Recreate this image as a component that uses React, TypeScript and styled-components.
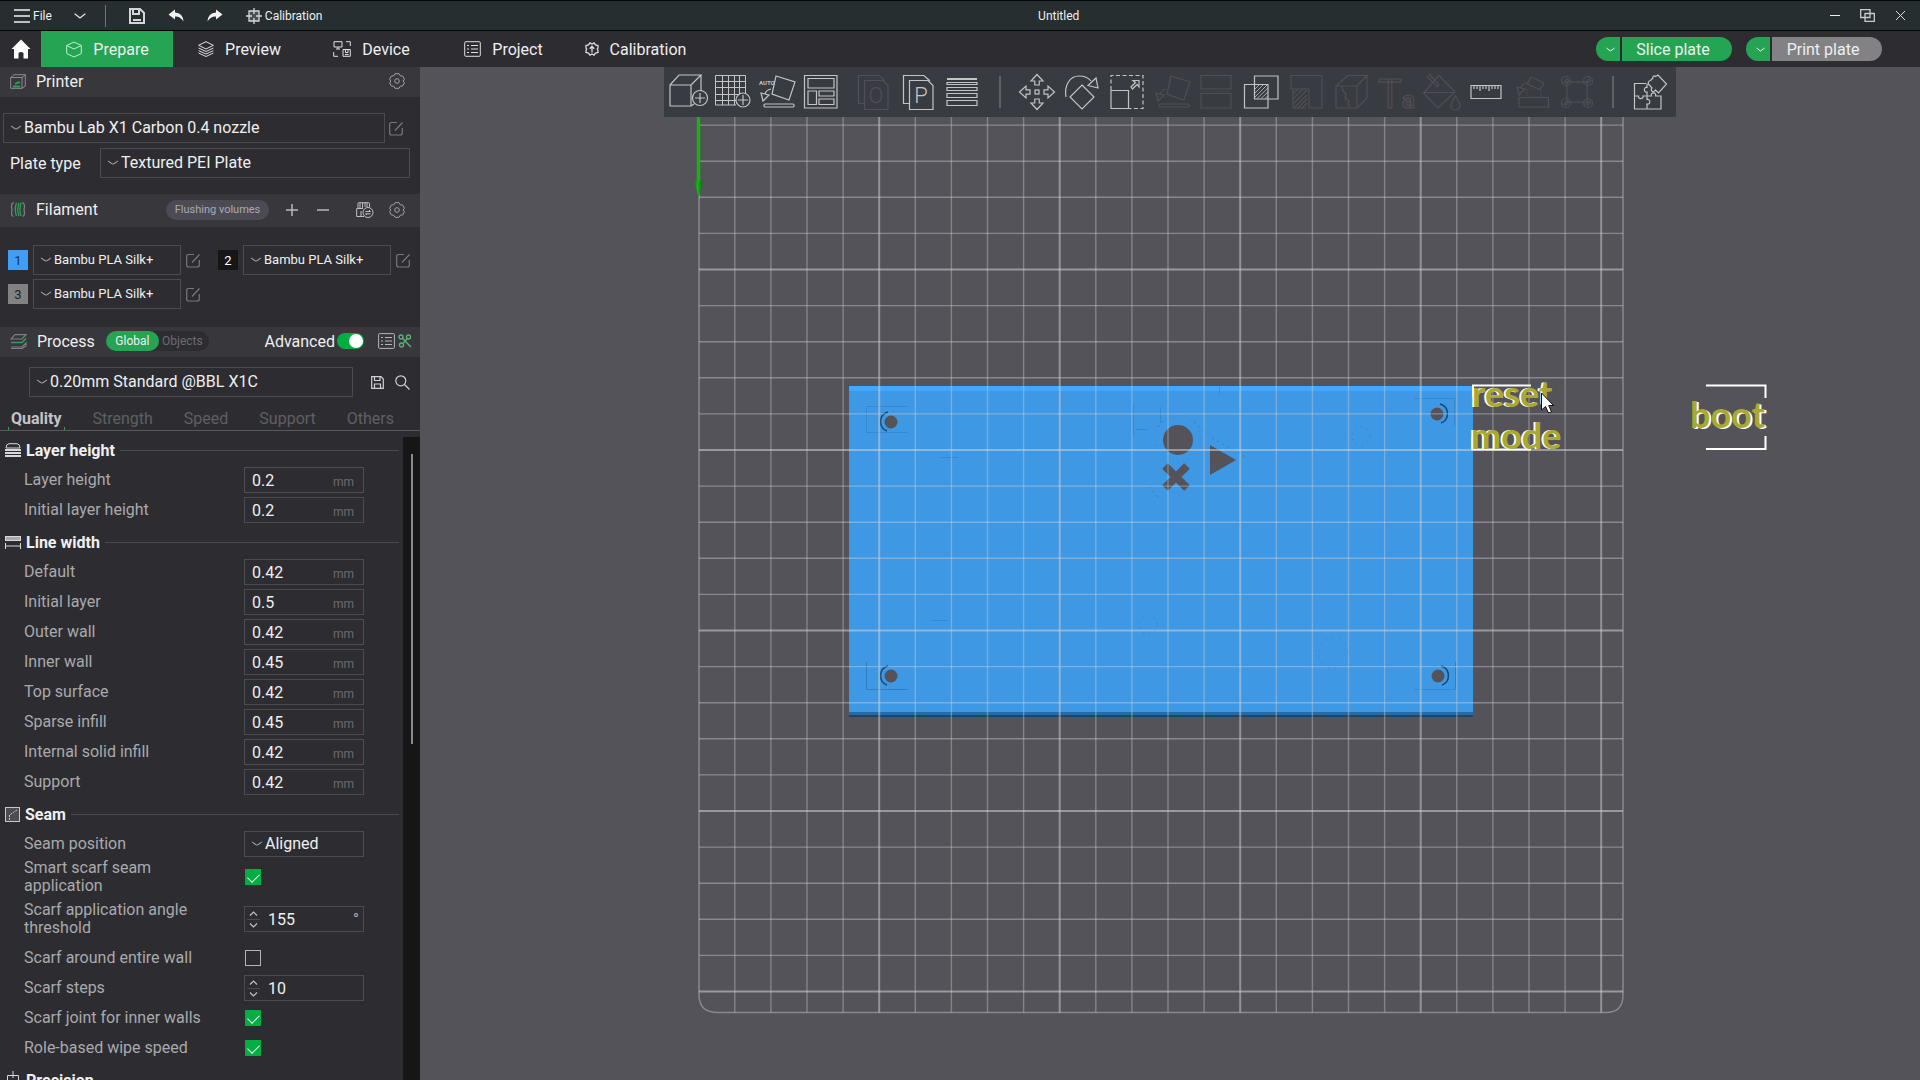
import React, { useId } from "react";
import styled, { createGlobalStyle, css } from "styled-components";

const c = {
  title: "#262e30",
  bar: "#2d2d31",
  head: "#37373c",
  line: "#4a4a51",
  green: "#25a453",
  bright: "#00ae42",
  text: "#efeff0",
  label: "#a9a9ad",
  dim: "#6b6b70",
  view: "#545359",
  tool: "#383b41",
};

const GlobalStyle = createGlobalStyle`
  * { box-sizing: border-box; }
  body { margin: 0; background: ${c.bar}; }
  body, button, input, select {
    font-family: Roboto, "Liberation Sans", sans-serif;
    font-size: 16px;
    color: ${c.text};
  }
  button { border: 0; padding: 0; background: none; }
  svg { display: block; flex: none; }
`;

const Shell = styled.div`
  display: flex;
  flex-direction: column;
  height: 100vh;
  overflow: hidden;
`;

/* ---------- title bar ---------- */
const TitleBar = styled.header`
  display: flex;
  align-items: center;
  height: 31px;
  flex: none;
  background: ${c.title};
  border-top: 1px solid #050606;
  border-bottom: 1px solid #050606;
  padding-right: 3px;
`;
const MenuGroup = styled.div`
  display: flex;
  align-items: center;
  padding-left: 14px;
  button {
    display: flex;
    align-items: center;
    gap: 3px;
    font-size: 12px;
  }
`;
const MenuCaret = styled.button`
  margin: 0 19px 0 22px;
`;
const MenuDivider = styled.div`
  width: 1px;
  height: 22px;
  background: #6f7475;
`;
const QuickActions = styled.div`
  display: flex;
  gap: 23px;
  margin-left: 23px;
`;
const DocTitle = styled.h1`
  flex: 1;
  margin: 0;
  text-align: center;
  font-size: 12px;
  font-weight: 400;
`;
const WindowControls = styled.div`
  display: flex;
  padding-left: 23px;
  button {
    width: 33px;
    height: 28px;
    display: flex;
    align-items: center;
    justify-content: center;
  }
`;

/* ---------- navigation ---------- */
const NavBar = styled.nav`
  display: flex;
  align-items: center;
  height: 36px;
  flex: none;
  background: ${c.bar};
  padding-right: 38px;
`;
const Home = styled.button`
  width: 41px;
  display: flex;
  justify-content: center;
`;
const NavTab = styled.button<{ $active?: boolean }>`
  width: 132px;
  height: 36px;
  display: flex;
  align-items: center;
  justify-content: center;
  gap: 11px;
  padding-left: 1px;
  background: ${(p) => (p.$active ? c.green : "transparent")};
`;
const NavSpace = styled.div`
  flex: 1;
`;
const SplitButton = styled.div`
  display: flex;
  gap: 2px;
  margin-left: 14px;
`;
const SplitCaret = styled.button`
  width: 24px;
  height: 24px;
  display: flex;
  align-items: center;
  justify-content: center;
  padding-left: 4px;
  border-radius: 12px 0 0 12px;
  background: ${c.green};
`;
const SplitMain = styled.button<{ $muted?: boolean }>`
  width: 110px;
  height: 24px;
  padding-right: 8px;
  border-radius: 0 12px 12px 0;
  background: ${(p) => (p.$muted ? "#828284" : c.green)};
`;

/* ---------- sidebar ---------- */
const Body = styled.div`
  display: flex;
  flex: 1;
  min-height: 0;
`;
const Sidebar = styled.aside`
  width: 420px;
  flex: none;
  display: flex;
  flex-direction: column;
  background: ${c.bar};
`;
const SectionHead = styled.div<{ $tall?: boolean; $wide?: boolean }>`
  display: flex;
  align-items: center;
  flex: none;
  height: ${(p) => (p.$tall ? 33 : 30)}px;
  padding: 0 ${(p) => (p.$wide ? 8 : 15)}px 2px 10px;
  background: ${c.head};
  h2 {
    margin: 0 0 0 10px;
    font-size: 16px;
    font-weight: 400;
  }
`;
const Push = styled.div`
  margin-left: auto;
  display: flex;
  align-items: center;
`;
const PrinterBody = styled.div`
  display: flex;
  flex-direction: column;
  gap: 5px;
  padding: 16px 10px 16px 3px;
`;
const Row = styled.div<{ $gap?: number }>`
  display: flex;
  align-items: center;
  gap: ${(p) => p.$gap ?? 4}px;
`;
const PlateLabel = styled.label`
  width: 90px;
  margin-left: 7px;
  margin-right: -4px;
`;
const SelectBox = styled.div<{ $w?: number; $h?: number; $small?: boolean }>`
  display: flex;
  align-items: center;
  height: ${(p) => p.$h ?? 30}px;
  ${(p) => (p.$w ? css`width: ${p.$w}px;` : css`flex: 1;`)}
  border: 1px solid ${c.line};
  padding: 0 0 1px 6px;
  select {
    flex: 1;
    min-width: 0;
    appearance: none;
    border: 0;
    padding: 0 0 0 2px;
    background: transparent;
    font-size: ${(p) => (p.$small ? 13 : 16)}px;
    outline: none;
  }
`;
const Pill = styled.button`
  width: 103px;
  height: 20px;
  border-radius: 10px;
  background: #4c4b54;
  color: #aaaab0;
  font-size: 11px;
`;
const HeadButtons = styled.div<{ $gap: number; $left: number }>`
  display: flex;
  align-items: center;
  gap: ${(p) => p.$gap}px;
  margin-left: ${(p) => p.$left}px;
  button { display: flex; }
`;
const FilamentGrid = styled.div`
  display: grid;
  grid-template-columns: 210px 1fr;
  row-gap: 4px;
  padding: 18px 8px;
`;
const Swatch = styled.button<{ $bg: string; $fg: string }>`
  width: 20px;
  height: 20px;
  background: ${(p) => p.$bg};
  color: ${(p) => p.$fg};
  font-size: 13px;
`;
const Segmented = styled.div`
  display: flex;
  width: 103px;
  height: 20px;
  margin-left: 11px;
  border-radius: 10px;
  background: ${c.bar};
`;
const Segment = styled.button<{ $on?: boolean }>`
  width: ${(p) => (p.$on ? 53 : 47)}px;
  border-radius: 10px;
  font-size: 12px;
  background: ${(p) => (p.$on ? c.green : "transparent")};
  color: ${(p) => (p.$on ? c.text : c.dim)};
`;
const Switch = styled.input`
  appearance: none;
  display: flex;
  align-items: center;
  justify-content: flex-end;
  width: 27px;
  height: 16px;
  margin: 0 14px 0 2px;
  padding: 0 1px;
  border-radius: 8px;
  background: ${c.bright};
  &::after {
    content: "";
    width: 14px;
    height: 14px;
    border-radius: 50%;
    background: #fff;
  }
`;
const ProcessRow = styled.div`
  display: flex;
  align-items: center;
  padding: 10px 10px 0 29px;
`;
const Tabs = styled.div`
  display: flex;
  flex: none;
  gap: 31px;
  height: 34px;
  padding: 0 8px;
  border-bottom: 1px solid #59595d;
`;
const Tab = styled.button<{ $on?: boolean }>`
  color: ${(p) => (p.$on ? "#c4c4c7" : "#5f5f64")};
  font-weight: ${(p) => (p.$on ? 700 : 400)};
  padding-top: 10px;
  ${(p) =>
    p.$on &&
    css`
      padding: 10px 3px 0;
      margin-right: -3px;
      background: linear-gradient(${c.green}, ${c.green}) 0 100% / 1px 3px no-repeat,
        linear-gradient(${c.green}, ${c.green}) 100% 100% / 1px 3px no-repeat;
    `}
`;
const Scroller = styled.div`
  display: flex;
  flex: 1;
  min-height: 0;
  overflow: hidden;
`;
const Settings = styled.div`
  flex: 1;
  padding: 4px 4px 0 5px;
`;
const Track = styled.div`
  width: 17px;
  margin-top: 6px;
  padding: 17px 7px 0 8px;
  background: #161616;
`;
const Thumb = styled.div`
  height: 290px;
  background: #8b8b8d;
`;
const Group = styled.fieldset`
  border: 0;
  margin: 0 0 2px;
  padding: 0;
`;
const GroupTitle = styled.div`
  display: flex;
  align-items: center;
  height: 30px;
  gap: 5px;
  font-weight: 700;
  &::after {
    content: "";
    flex: 1;
    height: 1px;
    background: ${c.line};
  }
`;
const Setting = styled.div<{ $h?: number }>`
  display: flex;
  align-items: center;
  height: ${(p) => p.$h ?? 30}px;
  padding-left: 19px;
`;
const SettingLabel = styled.label`
  width: 190px;
  margin-right: 30px;
  line-height: 18px;
  color: ${c.label};
`;
const FieldBox = styled.div`
  display: flex;
  align-items: center;
  width: 120px;
  height: 26px;
  border: 1px solid ${c.line};
  padding: 0 9px 0 7px;
  input {
    flex: 1;
    min-width: 0;
    border: 0;
    padding: 0;
    background: none;
    outline: none;
  }
  span {
    padding-top: 4px;
    font-size: 12px;
    color: ${c.dim};
  }
`;
const SpinBox = styled(FieldBox)`
  padding: 0 4px 0 2px;
  span { padding: 0; font-size: 16px; color: ${c.label}; }
`;
const Spin = styled.div`
  display: flex;
  flex-direction: column;
  margin-right: 8px;
  button {
    display: flex;
    align-items: center;
    justify-content: center;
    width: 13px;
    height: 12px;
  }
  button + button { border-top: 1px solid ${c.line}; }
`;
const Check = styled.input`
  appearance: none;
  display: flex;
  justify-content: center;
  width: 16px;
  height: 16px;
  margin: 0 0 0 1px;
  border: 1px solid #b4b4b6;
  &:checked {
    border-color: ${c.bright};
    background: ${c.bright};
  }
  &:checked::after {
    content: "";
    width: 10px;
    height: 6px;
    margin-top: 3px;
    border: solid #fff;
    border-width: 0 0 1px 1px;
    transform: rotate(-45deg);
  }
`;

/* ---------- viewport ---------- */
const Viewport = styled.main`
  position: relative;
  flex: 1;
  min-width: 0;
  display: flex;
  justify-content: center;
  align-items: flex-start;
  background: ${c.view};
`;
const Scene = styled.svg`
  position: absolute;
  inset: 0;
  width: 100%;
  height: 100%;
`;
const Toolbar = styled.div`
  position: relative;
  display: flex;
  align-items: center;
  height: 50px;
  padding-right: 4px;
  background: ${c.tool};
`;
const Tool = styled.button<{ $gap?: number }>`
  width: 45px;
  height: 50px;
  margin-left: ${(p) => p.$gap ?? 0}px;
  color: #c2c4c6;
  &:disabled { color: #504e56; }
`;
const ToolSep = styled.div`
  width: 2px;
  height: 32px;
  margin: 0 13px;
  background: #5e6065;
`;

/* ---------- icons ---------- */
type IcoProps = { w: number; h?: number; sw?: number; color?: string; children: React.ReactNode };
const Ico = ({ w, h = w, sw = 1, color = "#cfcfd1", children }: IcoProps) => (
  <svg width={w} height={h} viewBox={`0 0 ${w} ${h}`} fill="none" stroke={color} strokeWidth={sw} aria-hidden="true">
    {children}
  </svg>
);
const Chevron = ({ color = "#9d9da1" }: { color?: string }) => (
  <Ico w={12} h={6} color={color} sw={1.2}><path d="M1 1 C3 2 5 4 6 4 S9 2 11 1" /></Ico>
);
const Edit = () => (
  <Ico w={14} h={15} color="#77777c" sw={1.2}>
    <path d="M8 1.5H2.5Q.7 1.5 .7 3.5V12Q.7 14 2.5 14H11Q13.3 14 13.3 12V7M6 9.5L13.5 1.5" />
  </Ico>
);
const Gear = () => (
  <Ico w={16} color="#a2a2a6">
    <path d="M6 .7H10L11.3 2.8 13.6 3 15.4 6.2 14.2 8 15.4 9.8 13.6 13 11.3 13.2 10 15.3H6L4.7 13.2 2.4 13 .6 9.8 1.8 8 .6 6.2 2.4 3 4.7 2.8Z" />
    <circle cx="8" cy="8" r="2.3" />
  </Ico>
);

/* toolbar drawings, each on a 45 x 50 tile */
const dim = ["O", "lay", "cut", "support", "seam", "text", "paint", "assemble", "brim"];
const lay = (
  <>
    <path d="M22 9L41 15 35 33 18 27Z" />
    <path d="M7 26L15 28 9 34ZM11 27Q12 23 17 22" />
    <rect x="10" y="37" width="30" height="3" rx="1" />
  </>
);
const page = (letter: string) => (
  <>
    <path d="M13.500 13.500H32L37 18.500V42.500H13.500Z" />
    <path d="M13.500 36.500H7.500V8.500H28L34 14" />
    <text x="25" y="36" fontSize="22" fontWeight="300" textAnchor="middle" fill="currentColor" stroke="none">{letter}</text>
  </>
);
const tools: Record<string, React.ReactNode> = {
  add: (
    <>
      <path d="M6 18H27V39H6ZM6 18L15 8H37L27 18M37 8V24M27 39L30 37" />
      <circle cx="36" cy="31" r="7.5" /><path d="M36 26V36M31 31H41" />
    </>
  ),
  plate: (
    <>
      <path d="M27 38H6.500V8.500H36.500V26M13.500 8V38M19.500 8V38M25.500 8V38M30.500 8V27M6 14.500H36M6 20.500H36M6 27.500H30M6 33.500H27" strokeWidth="1" />
      <circle cx="34" cy="33" r="7" /><path d="M34 28V38M29 33H39" />
    </>
  ),
  auto: (
    <>
      <text x="5" y="18" fontSize="6" fontWeight="700" fill="currentColor" stroke="none">AUTO</text>
      {lay}
    </>
  ),
  arrange: <path d="M5.5 8.5H38V41H5.5ZM9 11.5H35V21H9ZM9 24H17.5V37.5H9ZM20 24H35V29H20ZM20 32H35V37.5H20Z" />,
  O: page("O"),
  P: page("P"),
  layers: <><path d="M6 12H36" strokeWidth="2" /><path d="M6 15.5H36V17.5H6ZM6 20.5H36V23.5H6ZM6 26.5H36V30.5H6ZM6 33.5H36V38.5H6Z" /></>,
  move: (
    <>
      <rect x="21" y="23" width="4" height="4" />
      {[0, 90, 180, 270].map((a) => (
        <path key={a} transform={`rotate(${a} 23 25)`} d="M23 7.5L29 14H25.2V18H20.8V14H17Z" />
      ))}
    </>
  ),
  rotate: <path d="M23 18L35 30 23 42 11 30ZM7 30C5 18 11 9 20 9Q28 9 32 14M37 11L29 18.5 39 21Z" />,
  scale: (
    <>
      <path d="M7 23V8.5H39V41.5H24" strokeDasharray="4 2.5" />
      <path d="M7 23.5H24.5V41.5H7ZM27 20L31.5 15.5 29 13.5H35V20L33 17.5 28.5 22Z" />
    </>
  ),
  lay,
  cut: <><path d="M7 8.5H37V22H7ZM7 26.5H37V41H7Z" /><path d="M7 24.5H37" strokeDasharray="1 1.5" /></>,
  bool: (
    <>
      <path d="M15.5 9H39V32H15.5ZM5.5 17.5H29V41H5.5Z" />
      <path d="M16 22L20 18M16 26L24 18M16 30L28 18M18 31.500L29 21M22 31.500L29 25M26 31.500L29 29" strokeWidth=".8" />
    </>
  ),
  support: (
    <>
      <path d="M7 22V8.5H38V41H25V22ZM9 22V41H22" />
      <path d="M9 27L14 22M9 32L19 22M9 37L23 23M10 41L23 28M14 41L23 32M18 41L23 36" />
    </>
  ),
  seam: <path d="M7 19H28V41H7ZM7 19L19 8.5H38L28 19M38 8.5V31L28 41M13 19L14 24 17 27 16 31 20 34 19 37 21 41" />,
  text: (
    <text x="4" y="41" fontSize="40">T<tspan fontSize="24" fontWeight="700">a</tspan></text>
  ),
  paint: <path d="M20 8.5L36 25 19 41 4.5 26ZM4.5 25.5H36M8 9L18 20 20 18 10 7M36.5 29Q32 36 32 38.5A4.5 4.5 0 0 0 41 38.5Q41 36 36.5 29Z" />,
  measure: <path d="M7 18.5H37V31.5H7ZM10 18V22M13 18V22M16 18V24M19 18V22M22 18V22M25 18V24M28 18V22M31 18V22M34 18V22" />,
  assemble: (
    <>
      <path d="M10 30.5H39.5V40H10ZM22 10L35 16 31 22.5 18 17ZM8 20L16 22 10 28ZM12 21Q13 17 17 16" />
      <path d="M18 22H32V30H18Z" strokeDasharray="1 1.5" />
    </>
  ),
  brim: (
    <>
      <rect x="13" y="15" width="20" height="20" />
      {[[12, 14], [34, 14], [12, 36], [34, 36]].map(([x, y]) => (
        <g key={`${x}-${y}`}><circle cx={x} cy={y} r="4.5" /><path d={`M${x - 3} ${y + 2}L${x + 2} ${y - 3}M${x - 1} ${y + 3}L${x + 3} ${y - 1}`} /></g>
      ))}
    </>
  ),
  puzzle: (
    <path d="M19 16.500H7.500V42H34V29H28.500C30 25 23 24.500 24.500 29H20V32.500C23.500 31.500 24 38 20 37V42M7.500 29H11.500C10.500 32.500 17 32.500 16 29H20V25C16.500 26 16.500 19.500 20 20.500V16.500M23.500 13.500L26 11C25 9.500 27 8 28.500 9.500L31 8 39.500 17 31.500 26 28.500 23C26.500 26.500 22.500 23.500 25 21L22.500 18C20.500 17.500 21 13.500 23.500 13.500" />
  ),
};
const toolRow: (string | null)[] = [
  "add", "plate", "auto", "arrange", "O", "P", "layers", null,
  "move", "rotate", "scale", "lay", "cut", "bool", "support", "seam", "text", "paint", "measure", "assemble", "brim", null,
  "puzzle",
];

/* ---------- sidebar pieces ---------- */
const Select = ({ label, id, value, w, h, small }: { label?: string; id?: string; value: string; w?: number; h?: number; small?: boolean }) => (
  <SelectBox $w={w} $h={h} $small={small}>
    <Chevron />
    <select id={id} aria-label={label} defaultValue={value}><option>{value}</option></select>
  </SelectBox>
);

const NumberSetting = ({ label, value }: { label: string; value: string }) => {
  const id = useId();
  return (
    <Setting>
      <SettingLabel htmlFor={id}>{label}</SettingLabel>
      <FieldBox><input id={id} defaultValue={value} /><span>mm</span></FieldBox>
    </Setting>
  );
};
const CheckSetting = ({ label, on, h }: { label: string; on?: boolean; h?: number }) => {
  const id = useId();
  return (
    <Setting $h={h}>
      <SettingLabel htmlFor={id}>{label}</SettingLabel>
      <Check id={id} type="checkbox" defaultChecked={on} />
    </Setting>
  );
};
const SpinSetting = ({ label, value, unit, h }: { label: string; value: string; unit?: string; h?: number }) => {
  const id = useId();
  return (
    <Setting $h={h}>
      <SettingLabel htmlFor={id}>{label}</SettingLabel>
      <SpinBox>
        <Spin>
          <button aria-label="Increase"><Ico w={9} h={5} color="#c4c4c7" sw={1.2}><path d="M1 4.500L4.500 1 8 4.500" /></Ico></button>
          <button aria-label="Decrease"><Ico w={9} h={5} color="#c4c4c7" sw={1.2}><path d="M1 .5L4.500 4 8 .5" /></Ico></button>
        </Spin>
        <input id={id} defaultValue={value} />
        {unit && <span>{unit}</span>}
      </SpinBox>
    </Setting>
  );
};
const Filament = ({ n, bg, fg }: { n: number; bg: string; fg: string }) => (
  <Row $gap={5}>
    <Swatch $bg={bg} $fg={fg}>{n}</Swatch>
    <Select label={`Filament ${n}`} value="Bambu PLA Silk+" w={148} small />
    <button aria-label={`Edit filament ${n}`}><Edit /></button>
  </Row>
);

const groupIcons = {
  layer: <Ico w={16} h={15} color="#d8d8da"><path d="M1 5Q1 1 4 .7H12Q15 1 15 5Z" /><path d="M0 7H16M0 10H16M0 13H16" strokeWidth="2" /></Ico>,
  line: <Ico w={16} h={13} color="#d8d8da"><rect x=".5" y=".5" width="15" height="4" fill="#a9a9ab" /><path d="M.5 7V13M15.500 7V13M0 10H16" /></Ico>,
  seam: <Ico w={15} color="#c8c8ca"><rect x=".5" y=".5" width="14" height="14" fill="#4c4c50" /><path d="M4.500 13V8L12 3" strokeDasharray="2 1" /></Ico>,
  precision: <Ico w={16} h={18} color="#d8d8da"><path d="M2.500 4.500H13.500V15.500H2.500ZM8 0V7M8 12V18M0 9.500H5M11 9.500H16" /></Ico>,
};

/* ---------- build plate ---------- */
const pitch = 36.1;
const cols = Array.from({ length: 25 }, (_, i) => i + 1);
const rows = Array.from({ length: 26 }, (_, i) => i);
const holes = [
  { x: 471, y: 355, s: -1 }, { x: 471, y: 609, s: -1 },
  { x: 1017, y: 347, s: 1 }, { x: 1018, y: 609, s: 1 },
];
const BuildPlate = () => (
  <Scene viewBox="0 0 1500 1013" preserveAspectRatio="xMidYMin slice" fill="none">
    <defs>
      <linearGradient id="cone">
        <stop offset="0" stopColor="#0a7a0a" />
        <stop offset=".4" stopColor="#14b814" />
        <stop offset="1" stopColor="#0a6a0a" />
      </linearGradient>
    </defs>
    <rect x="429" y="319" width="624" height="331" fill="#1d466b" />
    <rect x="429" y="319" width="624" height="327" fill="#3f98e3" />
    <rect x="429" y="319" width="624" height="5" fill="#46a6fb" />
    <rect x="429" y="645" width="624" height="3" fill="#266ba6" />
    <g stroke="#2f7fc4" strokeWidth="1">
      <path d="M446.500 366V339.500H488M446.500 365.500H488M994 331.500H1034.500V359M994 622.500H1035.500" opacity=".6" />
      <path d="M446.500 595V622.500H488M1035.500 622V595" />
      <path d="M520 390.500H538M511 553.500H528M713.500 338V370M716 362.500H728M740.500 340V356M799.500 320V328" opacity=".6" />
      <circle cx="758" cy="372" r="23" strokeDasharray="1 4" opacity=".6" />
      <path d="M774 355L784 364M792 371L826 390M738 430L730 420M738 360L744 352" strokeDasharray="2 4" />
      <circle cx="728" cy="558" r="9" strokeDasharray="1 5" />
      <circle cx="941" cy="369" r="9" strokeDasharray="1 5" />
      <circle cx="913" cy="586" r="15" strokeDasharray="1 6" />
    </g>
    {holes.map((o) => (
      <g key={`${o.x}-${o.y}`}>
        <path d={`M${o.x + o.s} ${o.y - 10}A10 10 0 0 ${o.s > 0 ? 1 : 0} ${o.x + o.s * 2} ${o.y + 9}`} transform={`translate(${o.s * 2} 0)`} stroke="#174a77" strokeWidth="1.500" />
        <circle cx={o.x} cy={o.y} r="6.500" fill={c.view} />
      </g>
    ))}
    <g fill={c.view}>
      <circle cx="758" cy="373" r="15" />
      <path d="M790 378L816 393 790 408Z" />
    </g>
    <path d="M745 399L767 421M767 399L745 421" stroke={c.view} strokeWidth="8" />
    <g stroke="#d2d2d6" strokeOpacity=".42">
      {cols.map((k) => (
        <path key={k} d={`M${278.7 + k * pitch} 0V945.500`} strokeWidth={k % 5 ? 1.4 : 2} strokeOpacity={k % 5 ? 0.38 : 0.5} />
      ))}
      {rows.map((k) => (
        <path key={k} d={`M279 ${924.5 - k * pitch}H1203`} strokeWidth={k % 5 ? 1.4 : 2} strokeOpacity={k % 5 ? 0.42 : 0.55} />
      ))}
      <path d="M1203 0V928Q1203 945.500 1186 945.500H298Q279 945.500 279 928V0" strokeWidth="1.500" />
    </g>
    <path d="M278.500 0V118" stroke="#17b317" strokeWidth="3.500" />
    <path d="M274 114H283L278.500 130Z" fill="url(#cone)" />
    <g stroke="#fff" strokeWidth="2">
      <path d="M1053 330V318.500H1111M1052.500 370V382.500H1111M1286 318.500H1345.500V331M1345.500 369V382H1286" />
    </g>
    <g fontFamily="Lato, sans-serif" fontWeight="700" fontSize="36">
      <g fill="#fff"><text x="1050" y="340">reset</text><text x="1049" y="382">mode</text><text x="1272" y="362">boot</text></g>
      <g fill="#a9a92f"><text x="1052" y="340">reset</text><text x="1051" y="382">mode</text><text x="1270" y="361">boot</text></g>
    </g>
    <path d="M1121.500 326V343L1125.500 339.500 1128.500 346 1131.500 344.700 1128.700 338.500H1133.500Z" fill="#fff" stroke="#111" />
  </Scene>
);

const navTabs: [string, React.ReactNode][] = [
  ["Prepare", <Ico w={16} h={17} color="#bff0cf"><path d="M8 1L15.300 4.500V12.500L8 16 .7 12.500V4.500ZM.7 4.500L8 8 15.300 4.500" /></Ico>],
  ["Preview", <Ico w={16} h={16} color="#dedee0"><path d="M8 .7L15.400 4.300 8 8 .6 4.300ZM.6 7L8 10.500 15.400 7M.6 9.600L8 13 15.400 9.600M.6 12L8 15.500 15.400 12" /></Ico>],
  ["Device", <Ico w={18} h={16} color="#dedee0"><path d="M1 .7H9V6H1ZM3 8H7M5 6V8M13 .7H17.300V5M.7 11V15.300H5M10 8.500H17.300V15.300H10ZM12.500 8.500V11.500H15V8.500M12 13.500H15.500" /></Ico>],
  ["Project", <Ico w={17} h={16} color="#dedee0"><rect x=".7" y=".7" width="15.600" height="14.600" rx="1" /><path d="M3 4.500H5M3 8H5M3 11.500H5M7 4.500H14M7 8H14M7 11.500H14" /></Ico>],
  ["Calibration", <Ico w={14} h={14} color="#dedee0" sw={1.3}><path d="M5 .9 7 2 9 .9 10.500 3 13 3.500V6L12.300 7 13 8.500V10.500L10.500 11 9 13.100 7 12 5 13.100 3.500 11 1 10.500V8.500L1.700 7 1 6V3.500L3.500 3Z" /><path d="M7 10.500V4.500M4.800 6.800L7 4.300 9.200 6.800" /></Ico>],
];

const widths = [["Default", "0.42"], ["Initial layer", "0.5"], ["Outer wall", "0.42"], ["Inner wall", "0.45"], ["Top surface", "0.42"], ["Sparse infill", "0.45"], ["Internal solid infill", "0.42"], ["Support", "0.42"]];

export default function App() {
  return (
    <Shell>
      <GlobalStyle />
      <TitleBar>
        <MenuGroup>
          <button><Ico w={16} h={14} color="#f0f0f0" sw={1.3}><path d="M0 1H16M0 7H16M0 13H16" /></Ico>File</button>
          <MenuCaret aria-label="More menus"><Ico w={12} h={6} color="#e4e4e4" sw={1.3}><path d="M.7 .7L6 5 11.300 .7" /></Ico></MenuCaret>
          <MenuDivider />
          <QuickActions>
            <button aria-label="Save"><Ico w={16} color="#d5d7d7" sw={2}><path d="M1 1H11L15 5V15H1Z" /><path d="M4 1V6H10V1M4 12H12" /></Ico></button>
            <button aria-label="Undo"><Ico w={16} h={13}><path d="M7 .5L.5 5.500 7 10.500V7.500Q12 7 15.500 12.500 15 4 7 3.500Z" fill="#f2f2f2" stroke="none" /></Ico></button>
            <button aria-label="Redo"><Ico w={16} h={13}><path d="M9 .5L15.500 5.500 9 10.500V7.500Q4 7 .5 12.500 1 4 9 3.500Z" fill="#f2f2f2" stroke="none" /></Ico></button>
            <button><Ico w={16} color="#d5d7d7" sw={1.3}><path d="M3 3H13V13H3ZM8 0V6M8 10V16M0 8H6M10 8H16" fill="#4b5254" /></Ico>Calibration</button>
          </QuickActions>
        </MenuGroup>
        <DocTitle>Untitled</DocTitle>
        <WindowControls>
          <button aria-label="Minimize"><Ico w={10} color="#eee"><path d="M0 4.500H10" /></Ico></button>
          <button aria-label="Restore"><Ico w={15} h={13} color="#c9cccc" sw={1.3}><path d="M.7 .7H10V8.500H.7ZM5 4.500H14.300V12.300H5Z" /></Ico></button>
          <button aria-label="Close"><Ico w={9} color="#ddd"><path d="M0 0L9 9M9 0L0 9" /></Ico></button>
        </WindowControls>
      </TitleBar>

      <NavBar>
        <Home aria-label="Home"><Ico w={20} h={20}><path d="M10 .5L19.500 10H17V19.500H12.500V14Q10 12 7.500 14V19.500H3V10H.5L10 .5" fill="#fff" stroke="none" /></Ico></Home>
        {navTabs.map(([name, icon], i) => (
          <NavTab key={name} $active={i === 0}>{icon}{name}</NavTab>
        ))}
        <NavSpace />
        <SplitButton>
          <SplitCaret aria-label="Slice options"><Ico w={9} h={5} color="#e9f7ee"><path d="M.5 1L4.500 4 8.500 1" /></Ico></SplitCaret>
          <SplitMain>Slice plate</SplitMain>
        </SplitButton>
        <SplitButton>
          <SplitCaret aria-label="Print options"><Ico w={9} h={5} color="#e9f7ee"><path d="M.5 1L4.500 4 8.500 1" /></Ico></SplitCaret>
          <SplitMain $muted>Print plate</SplitMain>
        </SplitButton>
      </NavBar>

      <Body>
        <Sidebar>
          <SectionHead>
            <Ico w={16} h={15} color="#8d8d91"><path d="M.7 3.500H12V14.300H.7ZM.7 3.500L4 .7H15.300L12 3.500M15.300 .7V12L12 14.300" /><path d="M3 12.500H10M5 10L8 8.500H10" stroke={c.green} strokeWidth="1.800" /></Ico>
            <h2>Printer</h2>
            <Push><button aria-label="Printer settings"><Gear /></button></Push>
          </SectionHead>
          <PrinterBody>
            <Row>
              <Select label="Printer" value="Bambu Lab X1 Carbon 0.4 nozzle" w={382} />
              <button aria-label="Edit printer"><Edit /></button>
            </Row>
            <Row>
              <PlateLabel htmlFor="plate">Plate type</PlateLabel>
              <Select id="plate" value="Textured PEI Plate" />
            </Row>
          </PrinterBody>

          <SectionHead $tall>
            <Ico w={16} h={15} color="#7d7d82" sw={1.3}><path d="M4 .7Q.5 1 2 7.500 .5 14 3.500 14.300M12 .7Q15.500 1 14 7.500 15.500 14 12.500 14.300" /><path d="M6.500 .7Q4 7.500 6.500 14M9 .7Q6.500 7.500 9 14M11 .7Q9 7.500 11 14" stroke={c.green} /></Ico>
            <h2>Filament</h2>
            <Push>
              <Pill>Flushing volumes</Pill>
              <HeadButtons $gap={19} $left={17}>
                <button aria-label="Add filament"><Ico w={12} color="#b9b9bc" sw={1.5}><path d="M6 0V12M0 6H12" /></Ico></button>
                <button aria-label="Remove filament"><Ico w={12} color="#b9b9bc" sw={1.5}><path d="M0 6H12" /></Ico></button>
              </HeadButtons>
              <HeadButtons $gap={15} $left={27}>
                <button aria-label="Sync filaments"><Ico w={18} h={16} color="#c0c0c3"><path d="M8 14.500H.7V6.500H2V1.500Q2 .7 3 .7H12.500Q13.500 .7 13.500 1.500V5M4 1V6M6.500 1V6M9 1V5M11 1V5M2 6.500H7M5 9V14" /><circle cx="12" cy="10.500" r="5" /><path d="M9.500 9.500H14.500L13 8M14.500 11.800H9.500L11 13" /></Ico></button>
                <button aria-label="Filament settings"><Gear /></button>
              </HeadButtons>
            </Push>
          </SectionHead>
          <FilamentGrid>
            <Filament n={1} bg="#409ff5" fg="#16395a" />
            <Filament n={2} bg="#161616" fg="#fff" />
            <Filament n={3} bg="#828282" fg="#222" />
          </FilamentGrid>

          <SectionHead $wide>
            <Ico w={17} h={15} color="#7d7d82" sw={1.2}><path d="M5 .7H16L12 5H1Z" /><path d="M1 8.500H12L16 4.500" stroke={c.green} strokeWidth="1.600" /><path d="M1 13H12L16 9V12L12 14.500H1" /></Ico>
            <h2>Process</h2>
            <Segmented><Segment $on>Global</Segment><Segment>Objects</Segment></Segmented>
            <Push>
              <label htmlFor="advanced">Advanced</label>
              <Switch id="advanced" type="checkbox" defaultChecked />
              <HeadButtons $gap={3} $left={0}>
                <button aria-label="Parameter list"><Ico w={17} h={16} color="#b4b4b7"><rect x=".6" y=".6" width="15.800" height="14.800" rx="1" /><path d="M3 4.500H5M3 8H5M3 11.500H5M7 4.500H14M7 8H14M7 11.500H14" /></Ico></button>
                <button aria-label="Compare presets"><Ico w={14} h={14} color="#59b27a" sw={1.400}><circle cx="3" cy="3" r="2" /><circle cx="10.500" cy="3" r="2" /><circle cx="3.500" cy="11" r="2" /><path d="M5 4.500L7 7L13 13M9 5L5.500 9" /></Ico></button>
              </HeadButtons>
            </Push>
          </SectionHead>
          <ProcessRow>
            <Select label="Process preset" value="0.20mm Standard @BBL X1C" w={325} />
            <HeadButtons $gap={11} $left={18}>
              <button aria-label="Save preset"><Ico w={13} h={13} color="#d0d0d2" sw={1.200}><path d="M.7 .7H10L12.300 3V12.300H.7ZM3.500 .7V4.500H9V.7M3.500 12V8H9.500V12" /></Ico></button>
              <button aria-label="Search"><Ico w={15} color="#d0d0d2" sw={1.200}><circle cx="5.800" cy="5.800" r="5" /><path d="M9.500 9.500L14.500 14.500" /></Ico></button>
            </HeadButtons>
          </ProcessRow>
          <Tabs>
            {["Quality", "Strength", "Speed", "Support", "Others"].map((t, i) => <Tab key={t} $on={i === 0}>{t}</Tab>)}
          </Tabs>

          <Scroller>
            <Settings>
              <Group>
                <GroupTitle>{groupIcons.layer}Layer height</GroupTitle>
                <NumberSetting label="Layer height" value="0.2" />
                <NumberSetting label="Initial layer height" value="0.2" />
              </Group>
              <Group>
                <GroupTitle>{groupIcons.line}Line width</GroupTitle>
                {widths.map(([l, v]) => <NumberSetting key={l} label={l} value={v} />)}
              </Group>
              <Group>
                <GroupTitle>{groupIcons.seam}Seam</GroupTitle>
                <Setting>
                  <SettingLabel htmlFor="seam">Seam position</SettingLabel>
                  <Select id="seam" value="Aligned" w={120} h={26} />
                </Setting>
                <CheckSetting label="Smart scarf seam application" on h={36} />
                <SpinSetting label="Scarf application angle threshold" value="155" unit="°" h={48} />
                <CheckSetting label="Scarf around entire wall" />
                <SpinSetting label="Scarf steps" value="10" />
                <CheckSetting label="Scarf joint for inner walls" on />
                <CheckSetting label="Role-based wipe speed" on />
              </Group>
              <Group>
                <GroupTitle>{groupIcons.precision}Precision</GroupTitle>
              </Group>
            </Settings>
            <Track><Thumb /></Track>
          </Scroller>
        </Sidebar>

        <Viewport>
          <BuildPlate />
          <Toolbar>
            {toolRow.map((t, i) =>
              t ? (
                <Tool key={t} aria-label={t} disabled={dim.includes(t)} $gap={t === "O" ? 7 : 0}>
                  <Ico w={45} h={50} color="currentColor" sw={1.2}>{tools[t]}</Ico>
                </Tool>
              ) : (
                <ToolSep key={i} />
              )
            )}
          </Toolbar>
        </Viewport>
      </Body>
    </Shell>
  );
}
